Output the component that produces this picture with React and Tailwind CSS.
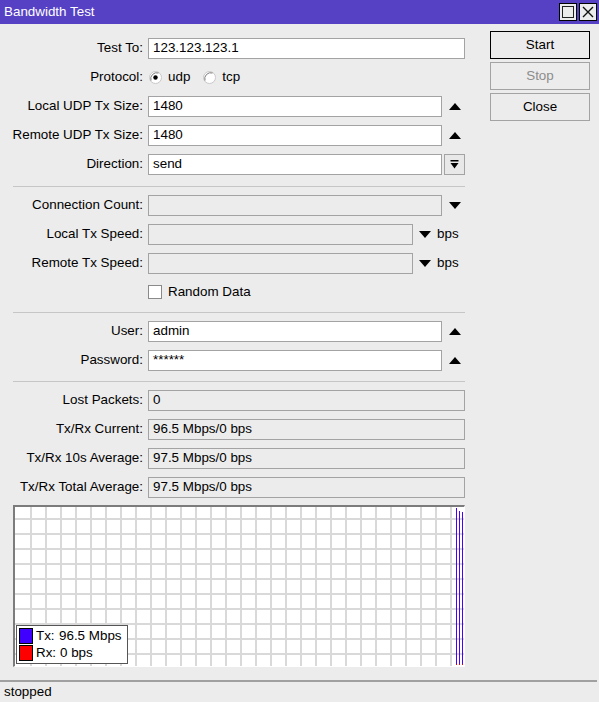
import { useState } from 'react';

const UpArrow = () => (
    <svg width="12" height="7" viewBox="0 0 12 7"><path d="M0 7 L6 0 L12 7 Z" fill="#000" /></svg>
);

const DownArrow = () => (
    <svg width="12" height="7" viewBox="0 0 12 7"><path d="M0 0 L12 0 L6 7 Z" fill="#000" /></svg>
);

function Row({ label, children }) {
    return (
        <div className="flex h-[21px] items-center">
            <div className="w-[143px] shrink-0 text-right whitespace-nowrap">{label}</div>
            <div className="ml-[5px] flex h-full items-center">{children}</div>
        </div>
    );
}

function Field({ value, width, disabled }) {
    return (
        <div
            className={`flex h-[21px] items-center border border-[#a3a3a3] px-[4px] whitespace-nowrap ${disabled ? 'bg-[#ececec]' : 'bg-white'}`}
            style={{ width }}
        >
            {value}
        </div>
    );
}

function Radio({ checked }) {
    return (
        <svg width="13" height="13" viewBox="0 0 13 13">
            <circle cx="6.5" cy="6.5" r="6" fill="#fff" stroke="#c8c8c8" />
            <path d="M2 9.5 A6 6 0 0 1 9.5 2" fill="none" stroke="#7a7a7a" strokeWidth="1" />
            {checked && <circle cx="6.5" cy="6.5" r="2.2" fill="#000" />}
        </svg>
    );
}

function Separator({ className }) {
    return <div className={`ml-[13px] h-px w-[452px] bg-[#c6c6c6] ${className}`} />;
}

function Chart() {
    const verticals = Array.from({ length: 29 }, (_, k) => 15 + 15 * k);
    const horizontals = Array.from({ length: 10 }, (_, k) => 11 + 15 * k);
    return (
        <div className="relative ml-[13px] mt-[-1px] h-[162px] w-[452px] border-t-2 border-l-2 border-r border-b border-t-[#7c7c7c] border-l-[#7c7c7c] border-r-white border-b-white bg-white">
            <svg width="449" height="159" className="block">
                {verticals.map((x) => (
                    <rect key={'v' + x} x={x} y="0" width="2" height="159" fill="#d9d9d9" />
                ))}
                {horizontals.map((y) => (
                    <rect key={'h' + y} x="0" y={y} width="449" height="2" fill="#d9d9d9" />
                ))}
                <rect x="441" y="1" width="1" height="157" fill="#4a00ff" />
                <rect x="444" y="4" width="1" height="154" fill="#4a00ff" />
                <rect x="447" y="5" width="1" height="153" fill="#4a00ff" />
                <rect x="441" y="157" width="1" height="1" fill="#ff0000" />
                <rect x="444" y="157" width="1" height="1" fill="#ff0000" />
                <rect x="447" y="157" width="1" height="1" fill="#ff0000" />
            </svg>
            <div className="absolute left-[1px] top-[118px] flex w-[112px] flex-col gap-[1px] border border-[#555] bg-white px-[2px] py-[2px]">
                <div className="flex h-[16px] items-center">
                    <div className="h-[16px] w-[14px] border border-black bg-[#4000ff]" />
                    <span className="ml-[3px] w-[23px]">Tx:</span>
                    <span>96.5 Mbps</span>
                </div>
                <div className="flex h-[16px] items-center">
                    <div className="h-[16px] w-[14px] border border-black bg-[#ff0000]" />
                    <span className="ml-[3px] w-[24px]">Rx:</span>
                    <span>0 bps</span>
                </div>
            </div>
        </div>
    );
}

export default function App() {
    const [protocol, setProtocol] = useState('udp');
    const [randomData, setRandomData] = useState(false);

    return (
        <div className="flex h-[702px] w-[599px] flex-col bg-[#ececec] text-[13.4px] text-black" style={{ fontFamily: '"Liberation Sans", Arial, sans-serif' }}>
            {/* title bar */}
            <div className="flex h-[24px] shrink-0 items-center justify-between bg-[#5641c5] pl-[4px] pr-[2px]">
                <span className="text-white">Bandwidth Test</span>
                <div className="flex gap-[2px]">
                    <div className="flex h-[18px] w-[18px] items-center justify-center border border-black bg-[#ececec]">
                        <div className="h-[12px] w-[12px] border border-[#222]" />
                    </div>
                    <div className="flex h-[18px] w-[18px] items-center justify-center border border-black bg-[#ececec]">
                        <svg width="12" height="12" viewBox="0 0 12 12">
                            <path d="M1 1 L11 11 M11 1 L1 11" stroke="#111" strokeWidth="1.4" />
                        </svg>
                    </div>
                </div>
            </div>

            <div className="flex flex-1">
                {/* form */}
                <div className="flex w-[465px] flex-col gap-[8px] pt-[14px]">
                    <Row label="Test To:">
                        <Field value="123.123.123.1" width={317} />
                    </Row>
                    <Row label="Protocol:">
                        <label className="flex items-center" onClick={() => setProtocol('udp')}>
                            <span className="ml-[1px] flex"><Radio checked={protocol === 'udp'} /></span>
                            <span className="ml-[6px]">udp</span>
                        </label>
                        <label className="ml-[13px] flex items-center" onClick={() => setProtocol('tcp')}>
                            <Radio checked={protocol === 'tcp'} />
                            <span className="ml-[6px]">tcp</span>
                        </label>
                    </Row>
                    <Row label="Local UDP Tx Size:">
                        <Field value="1480" width={294} />
                        <span className="ml-[7px] flex"><UpArrow /></span>
                    </Row>
                    <Row label="Remote UDP Tx Size:">
                        <Field value="1480" width={294} />
                        <span className="ml-[7px] flex"><UpArrow /></span>
                    </Row>
                    <Row label="Direction:">
                        <Field value="send" width={294} />
                        <div className="ml-[2px] flex h-[21px] w-[21px] flex-col items-center justify-center border border-[#a3a3a3] bg-[#e8e8e8]">
                            <svg width="9" height="9" viewBox="0 0 9 9">
                                <rect x="0.5" y="0" width="8" height="1.5" fill="#000" />
                                <path d="M0.5 3 L8.5 3 L4.5 8.5 Z" fill="#000" />
                            </svg>
                        </div>
                    </Row>
                    <Separator className="mt-[3px]" />
                    <Row label="Connection Count:">
                        <Field value="" width={294} disabled />
                        <span className="ml-[7px] flex"><DownArrow /></span>
                    </Row>
                    <Row label="Local Tx Speed:">
                        <Field value="" width={265} disabled />
                        <span className="ml-[6px] flex"><DownArrow /></span>
                        <span className="ml-[6px]">bps</span>
                    </Row>
                    <Row label="Remote Tx Speed:">
                        <Field value="" width={265} disabled />
                        <span className="ml-[6px] flex"><DownArrow /></span>
                        <span className="ml-[6px]">bps</span>
                    </Row>
                    <Row label="">
                        <label className="flex items-center" onClick={() => setRandomData(!randomData)}>
                            <div className="flex h-[14px] w-[14px] items-center justify-center border border-[#8a8a8a] bg-white">
                                {randomData && (
                                    <svg width="10" height="10" viewBox="0 0 10 10"><path d="M1 5 L4 8 L9 1" stroke="#000" strokeWidth="1.5" fill="none" /></svg>
                                )}
                            </div>
                            <span className="ml-[6px]">Random Data</span>
                        </label>
                    </Row>
                    <Separator className="mt-[1px]" />
                    <Row label="User:">
                        <Field value="admin" width={294} />
                        <span className="ml-[7px] flex"><UpArrow /></span>
                    </Row>
                    <Row label="Password:">
                        <Field value="******" width={294} />
                        <span className="ml-[7px] flex"><UpArrow /></span>
                    </Row>
                    <Separator className="mt-[2px]" />
                    <Row label="Lost Packets:">
                        <Field value="0" width={317} disabled />
                    </Row>
                    <Row label="Tx/Rx Current:">
                        <Field value="96.5 Mbps/0 bps" width={317} disabled />
                    </Row>
                    <Row label="Tx/Rx 10s Average:">
                        <Field value="97.5 Mbps/0 bps" width={317} disabled />
                    </Row>
                    <Row label="Tx/Rx Total Average:">
                        <Field value="97.5 Mbps/0 bps" width={317} disabled />
                    </Row>
                    <Chart />
                </div>

                {/* buttons */}
                <div className="ml-[25px] flex w-[100px] flex-col gap-[3px] pt-[7px]">
                    <button className="h-[28px] border border-black bg-[#ececec]">Start</button>
                    <button className="h-[28px] border border-[#a3a3a3] bg-[#ececec] text-[#8c8c8c]">Stop</button>
                    <button className="h-[28px] border border-[#a3a3a3] bg-[#ececec]">Close</button>
                </div>
            </div>

            {/* status bar */}
            <div className="flex h-[22px] w-[597px] shrink-0 items-center border-t-2 border-[#a0a0a0] pl-[4px]">
                stopped
            </div>
        </div>
    );
}
